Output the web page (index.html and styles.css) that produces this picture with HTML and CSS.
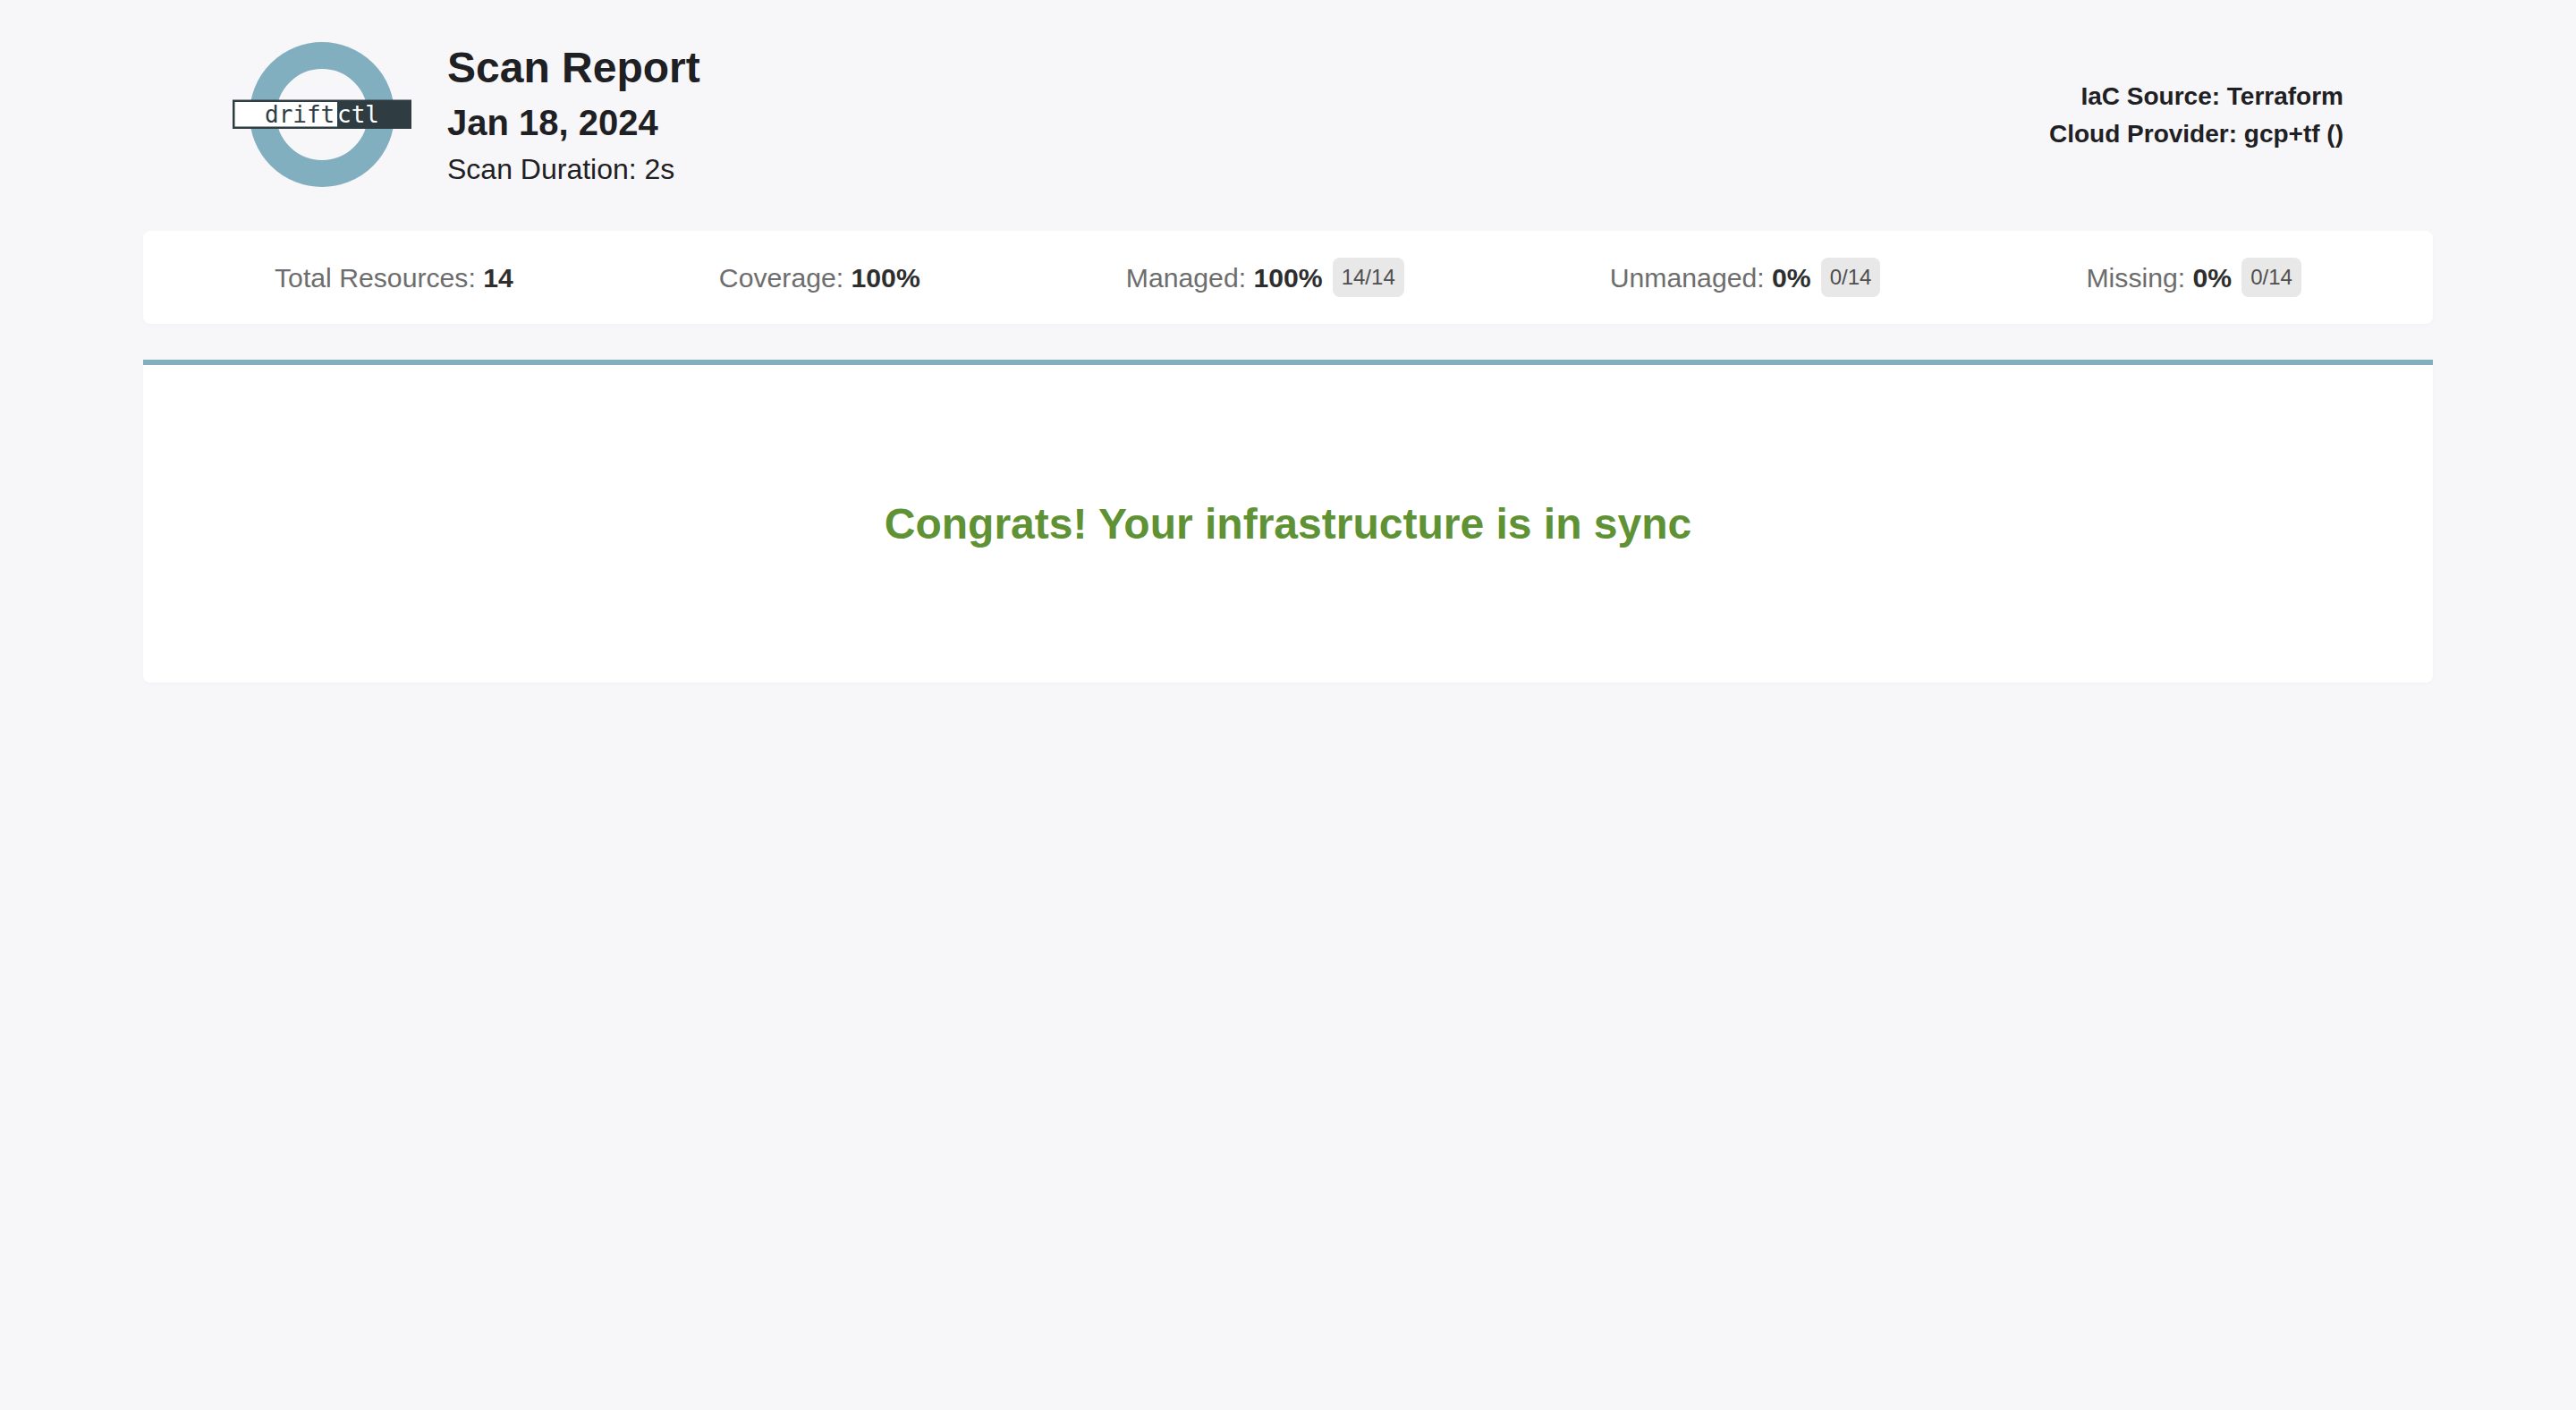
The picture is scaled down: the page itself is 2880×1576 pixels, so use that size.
FILE: index.html
```html
<!DOCTYPE html>
<html lang="en">
<head>
<meta charset="utf-8">
<title>driftctl Scan Report</title>
<link rel="stylesheet" href="styles.css">
</head>
<body>
<div class="container">
  <header class="header">
    <div class="brand">
      <svg class="logo" viewBox="0 0 200 162" width="200" height="162" aria-label="driftctl logo">
        <circle class="ring" cx="100" cy="81" r="66"/>
        <rect class="logo-dark" x="0" y="64.5" width="200" height="32.5"/>
        <rect class="logo-light" x="2.5" y="67" width="114.5" height="27.5"/>
        <text class="logo-text logo-drift" x="36" y="90">drift</text>
        <text class="logo-text logo-ctl" x="117" y="90">ctl</text>
      </svg>
      <div class="titles">
        <h1 class="title">Scan Report</h1>
        <h2 class="date">Jan 18, 2024</h2>
        <p class="duration">Scan Duration: 2s</p>
      </div>
    </div>
    <div class="source">
      <div>IaC Source: Terraform</div>
      <div>Cloud Provider: gcp+tf ()</div>
    </div>
  </header>
  <section class="card stats">
    <div class="stat">Total Resources: <strong>14</strong></div>
    <div class="stat">Coverage: <strong>100%</strong></div>
    <div class="stat">Managed: <strong>100%</strong><span class="badge">14/14</span></div>
    <div class="stat">Unmanaged: <strong>0%</strong><span class="badge">0/14</span></div>
    <div class="stat">Missing: <strong>0%</strong><span class="badge">0/14</span></div>
  </section>
  <section class="card result">
    <p class="congrats">Congrats! Your infrastructure is in sync</p>
  </section>
</div>
</body>
</html>
```

FILE: styles.css
```css
* { box-sizing: border-box; }
html, body { margin: 0; padding: 0; }
body {
  min-height: 1576px;
  background: #f7f7fa;
  color: #1f2023;
  font-family: "Liberation Sans", Arial, sans-serif;
}
.container { width: 2560px; margin: 0 auto; }
.header {
  height: 258px;
  padding: 47px 100px 0;
  display: flex;
  justify-content: space-between;
  align-items: flex-start;
}
.brand { display: flex; align-items: flex-start; gap: 40px; }
.logo { display: block; }
.ring { fill: none; stroke: #81afbf; stroke-width: 30; }
.logo-dark { fill: #2f3d42; }
.logo-light { fill: #fff; }
.logo-text { font-family: "DejaVu Sans Mono", monospace; font-size: 26px; }
.logo-drift { fill: #2f3d42; }
.logo-ctl { fill: #fff; }
.titles { margin-top: -1px; }
.title { margin: 0; font-size: 48px; line-height: 60px; font-weight: 700; }
.date { margin: 5px 0 0; font-size: 40px; line-height: 52px; font-weight: 700; }
.duration { margin: 2px 0 0; font-size: 32px; line-height: 48px; }
.source {
  margin-top: 40px;
  text-align: right;
  font-size: 28px;
  line-height: 42px;
  font-weight: 700;
}
.card {
  background: #fff;
  border-radius: 8px;
  box-shadow: 0 2px 4px rgba(0, 0, 0, 0.02);
}
.stats {
  height: 104px;
  padding: 2px 32px 0;
  display: flex;
  justify-content: space-around;
  align-items: center;
}
.stat { color: #6d6d6d; font-size: 30.2px; display: flex; align-items: center; white-space: pre; }
.stat strong { color: #2e2e2e; font-weight: 700; }
.badge {
  margin: 0 0 2px 11px;
  padding: 0 10px;
  height: 44px;
  line-height: 44px;
  border-radius: 8px;
  background: #e8e8e8;
  color: #4f4f4f;
  font-size: 24px;
}
.result {
  margin-top: 40px;
  height: 361px;
  border-top: 6px solid #81afbf;
  border-radius: 0 0 8px 8px;
  display: flex;
  align-items: center;
  justify-content: center;
}
.congrats { margin: 0; color: #5f9234; font-size: 48px; font-weight: 700; }
```
